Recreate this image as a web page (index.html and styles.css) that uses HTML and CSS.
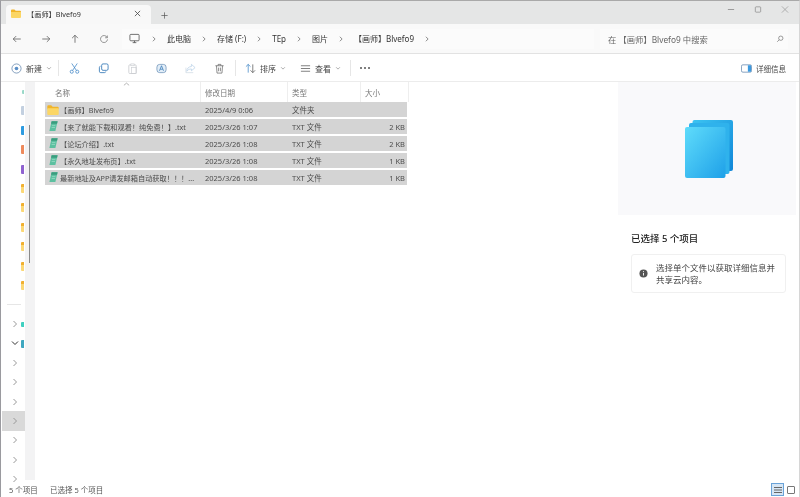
FILE: index.html
```html
<!DOCTYPE html>
<html lang="zh">
<head>
<meta charset="utf-8">
<title>【画师】Blvefo9</title>
<link rel="stylesheet" href="styles.css">
</head>
<body>
<svg class="defs" width="0" height="0" aria-hidden="true">
  <symbol id="folder" viewBox="0 0 16 14"><path d="M0 2a1.500 1.500 0 0 1 1.500-1.500h4l2 2h7A1.500 1.500 0 0 1 16 4v2H0z" fill="#f0b429"/><path d="M0 4.500h16v8A1.500 1.500 0 0 1 14.500 14h-13A1.500 1.500 0 0 1 0 12.500z" fill="#fbd665"/></symbol>
  <symbol id="txt" viewBox="0 0 12 14"><path d="M3.500 .5h8L8.500 13.500H.5z" fill="#5cc0a0"/><path d="M3.500 .5h8l-.8 3.500H2.700z" fill="#3a9c7e"/><path d="M4 6.500h4.500M3.500 9h4.500" stroke="#b9e6d6" stroke-width=".7"/></symbol>
  <symbol id="chev" viewBox="0 0 8 8"><path d="M2.500 1l3 3-3 3" fill="none" stroke="currentColor" stroke-width="1"/></symbol>
  <symbol id="drop" viewBox="0 0 8 8"><path d="M1.500 3l2.500 2.500L6.500 3" fill="none" stroke="currentColor" stroke-width=".8"/></symbol>
</svg>
<div class="window">
  <header class="titlebar">
    <div class="tab">
      <svg class="tab-ico"><use href="#folder"/></svg>
      <span class="tab-title">【画师】Blvefo9</span>
      <svg class="tab-x" viewBox="0 0 8 8"><path d="M1 1l6 6M7 1L1 7" stroke="#444" stroke-width=".9"/></svg>
    </div>
    <svg class="tab-plus" viewBox="0 0 9 9"><path d="M4.500 .5v8M.5 4.500h8" stroke="#555" stroke-width=".9"/></svg>
    <div class="winctl">
      <svg viewBox="0 0 9 9"><path d="M1 4.500h7" stroke="#888" stroke-width=".9"/></svg>
      <svg viewBox="0 0 9 9"><rect x="1.500" y="1.500" width="6" height="6" rx=".8" fill="none" stroke="#888" stroke-width=".8"/></svg>
      <svg viewBox="0 0 9 9"><path d="M1 1l7 7M8 1L1 8" stroke="#999" stroke-width=".8"/></svg>
    </div>
  </header>
  <nav class="navbar">
    <div class="navbtns">
      <svg viewBox="0 0 12 12"><path d="M10.500 6h-9M5 2.500L1.500 6 5 9.500" fill="none" stroke="#555" stroke-width=".9"/></svg>
      <svg viewBox="0 0 12 12"><path d="M1.500 6h9M7 2.500L10.500 6 7 9.500" fill="none" stroke="#555" stroke-width=".9"/></svg>
      <svg viewBox="0 0 12 12"><path d="M6 10.500v-9M2.500 5L6 1.500 9.500 5" fill="none" stroke="#555" stroke-width=".9"/></svg>
      <svg viewBox="0 0 12 12"><path d="M9.800 4.200A4.200 4.200 0 1 0 10.200 6.500M10 1.800v2.700H7.300" fill="none" stroke="#666" stroke-width=".8"/></svg>
    </div>
    <div class="address">
      <svg class="pc" viewBox="0 0 12 12"><rect x="1" y="1.500" width="10" height="7" rx="1" fill="none" stroke="#555" stroke-width=".9"/><path d="M4 10.500h4M6 8.500v2" stroke="#555" stroke-width=".9"/></svg>
      <svg class="crumb-chev"><use href="#chev"/></svg><span>此电脑</span>
      <svg class="crumb-chev"><use href="#chev"/></svg><span>存储 (F:)</span>
      <svg class="crumb-chev"><use href="#chev"/></svg><span>TEp</span>
      <svg class="crumb-chev"><use href="#chev"/></svg><span>图片</span>
      <svg class="crumb-chev"><use href="#chev"/></svg><span>【画师】Blvefo9</span>
      <svg class="crumb-chev"><use href="#chev"/></svg>
    </div>
    <div class="search">
      <span>在 【画师】Blvefo9 中搜索</span>
      <svg viewBox="0 0 10 10"><circle cx="6" cy="4" r="2.700" fill="none" stroke="#666" stroke-width=".8"/><path d="M4 6L1.500 8.500" stroke="#666" stroke-width=".8"/></svg>
    </div>
  </nav>
  <div class="toolbar">
    <div class="tool tool-new">
      <svg class="ico" viewBox="0 0 12 12"><circle cx="6" cy="6" r="5" fill="none" stroke="#5a7fa8" stroke-width=".8"/><circle cx="6" cy="6" r="2" fill="#5b8fc7"/></svg>
      <span>新建</span><svg class="drop"><use href="#drop"/></svg>
    </div>
    <i class="sep sep-a"></i>
    <div class="actions">
      <svg class="ico" viewBox="0 0 12 12"><path d="M3 .5l5 7.500M9 .5L4 8" stroke="#3b82c4" stroke-width=".8"/><circle cx="3" cy="9.500" r="1.700" fill="none" stroke="#3b82c4" stroke-width=".8"/><circle cx="9" cy="9.500" r="1.700" fill="none" stroke="#3b82c4" stroke-width=".8"/></svg>
      <svg class="ico" viewBox="0 0 12 12"><rect x="4" y="1" width="7" height="7" rx="1.500" fill="none" stroke="#2f74b5" stroke-width=".9"/><path d="M2.700 3.500A1.500 1.500 0 0 0 1.500 5v4A1.500 1.500 0 0 0 3 10.500h4A1.500 1.500 0 0 0 8.500 9.300" fill="none" stroke="#2f74b5" stroke-width=".9"/></svg>
      <svg class="ico" viewBox="0 0 12 12"><rect x="2" y="2" width="8" height="9.500" rx="1" fill="none" stroke="#c9ccd0" stroke-width=".9"/><rect x="4.200" y="1" width="3.600" height="2" fill="#fff" stroke="#c9ccd0" stroke-width=".7"/><rect x="5" y="5" width="5" height="6.500" fill="none" stroke="#c9ccd0" stroke-width=".7"/></svg>
      <svg class="ico" viewBox="0 0 12 12"><rect x="1" y="1.500" width="10" height="9" rx="3" fill="#e3eef8" stroke="#6a8fb5" stroke-width=".8"/><path d="M3.800 8.500l2.200-5.500 2.200 5.500M4.700 6.800h2.600" fill="none" stroke="#2f74b5" stroke-width=".8"/></svg>
      <svg class="ico" viewBox="0 0 12 12"><path d="M7 1.500l4 3.500-4 3.500V6.500C4.500 6.500 3 7.500 2 9c0-3 2-5 5-5.200z" fill="none" stroke="#b6cfe6" stroke-width=".8"/><path d="M1 5v5.500h8" fill="none" stroke="#c9d5e0" stroke-width=".7"/></svg>
      <svg class="ico" viewBox="0 0 12 12"><path d="M1.500 3h9M4.500 3V1.500h3V3M2.700 3l.6 8h5.400l.6-8M5 5v4M7 5v4" fill="none" stroke="#666" stroke-width=".8"/></svg>
    </div>
    <i class="sep sep-b"></i>
    <div class="tool tool-sort">
      <svg class="ico" viewBox="0 0 12 12"><path d="M3.500 10.500v-9M1 4l2.500-2.500L6 4" fill="none" stroke="#3b82c4" stroke-width=".8"/><path d="M8.500 1.500v9M6 8l2.500 2.500L11 8" fill="none" stroke="#555" stroke-width=".8"/></svg>
      <span>排序</span><svg class="drop"><use href="#drop"/></svg>
    </div>
    <div class="tool tool-view">
      <svg class="ico" viewBox="0 0 12 12"><path d="M1 3h10M1 6h10M1 9h10" stroke="#666" stroke-width=".9"/></svg>
      <span>查看</span><svg class="drop"><use href="#drop"/></svg>
    </div>
    <i class="sep sep-c"></i>
    <div class="more"><i></i><i></i><i></i></div>
    <div class="tool tool-details">
      <svg class="ico" viewBox="0 0 12 12"><rect x=".5" y="2" width="11" height="8" rx="1.500" fill="none" stroke="#5a7fa8" stroke-width=".8"/><rect x="7.500" y="2.500" width="3.500" height="7" fill="#3b9ae0"/></svg>
      <span>详细信息</span>
    </div>
  </div>
  <main class="main">
    <aside class="sidebar">
      <div class="side-tree">
        <div class="srow"><i class="chip c-teal"></i></div>
        <div class="srow"><i class="chip c-pale"></i></div>
        <div class="srow"><i class="chip c-blue"></i></div>
        <div class="srow"><i class="chip c-orange"></i></div>
        <div class="srow"><i class="chip c-purple"></i></div>
        <div class="srow"><i class="chip c-yellow"></i></div>
        <div class="srow"><i class="chip c-yellow"></i></div>
        <div class="srow"><i class="chip c-yellow"></i></div>
        <div class="srow"><i class="chip c-yellow"></i></div>
        <div class="srow"><i class="chip c-yellow"></i></div>
        <div class="srow"><i class="chip c-yellow"></i></div>
        <div class="sdiv"></div>
        <div class="srow"><svg class="schev"><use href="#chev"/></svg><i class="chip c-mint"></i></div>
        <div class="srow"><svg class="schev down" viewBox="0 0 8 8"><path d="M1 2.500l3 3 3-3" fill="none" stroke="#333" stroke-width="1"/></svg><i class="chip c-sea"></i></div>
        <div class="srow"><svg class="schev"><use href="#chev"/></svg></div>
        <div class="srow"><svg class="schev"><use href="#chev"/></svg></div>
        <div class="srow"><svg class="schev"><use href="#chev"/></svg></div>
        <div class="srow selected"><svg class="schev"><use href="#chev"/></svg></div>
        <div class="srow"><svg class="schev"><use href="#chev"/></svg></div>
        <div class="srow"><svg class="schev"><use href="#chev"/></svg></div>
        <div class="srow"><svg class="schev"><use href="#chev"/></svg></div>
      </div>
      <div class="side-gutter"><i class="thumb"></i></div>
    </aside>
    <section class="files">
      <div class="fhead">
        <div class="hcell hname">名称<svg class="sortcaret" viewBox="0 0 8 4"><path d="M1 3.500L4 1l3 2.500" fill="none" stroke="#888" stroke-width=".7"/></svg></div>
        <div class="hcell">修改日期</div>
        <div class="hcell">类型</div>
        <div class="hcell">大小</div>
      </div>
      <div class="frow">
        <div class="fname"><svg class="fico"><use href="#folder"/></svg><span>【画师】Blvefo9</span></div>
        <div>2025/4/9 0:06</div><div>文件夹</div><div class="fsize"></div>
      </div>
      <div class="frow">
        <div class="fname"><svg class="fico fico-txt"><use href="#txt"/></svg><span>【来了就能下载和观看！纯免费！】.txt</span></div>
        <div>2025/3/26 1:07</div><div>TXT 文件</div><div class="fsize">2 KB</div>
      </div>
      <div class="frow">
        <div class="fname"><svg class="fico fico-txt"><use href="#txt"/></svg><span>【论坛介绍】.txt</span></div>
        <div>2025/3/26 1:08</div><div>TXT 文件</div><div class="fsize">2 KB</div>
      </div>
      <div class="frow">
        <div class="fname"><svg class="fico fico-txt"><use href="#txt"/></svg><span>【永久地址发布页】.txt</span></div>
        <div>2025/3/26 1:08</div><div>TXT 文件</div><div class="fsize">1 KB</div>
      </div>
      <div class="frow">
        <div class="fname"><svg class="fico fico-txt"><use href="#txt"/></svg><span>最新地址及APP请发邮箱自动获取！！！...</span></div>
        <div>2025/3/26 1:08</div><div>TXT 文件</div><div class="fsize">1 KB</div>
      </div>
    </section>
    <aside class="details">
      <div class="preview">
        <svg class="stack" viewBox="0 0 48 58">
          <defs>
            <linearGradient id="pg" x1="0" y1="0" x2="1" y2="1"><stop offset="0" stop-color="#5fdcfb"/><stop offset="1" stop-color="#1ea0e8"/></linearGradient>
            <linearGradient id="pb" x1="0" y1="0" x2="1" y2="1"><stop offset="0" stop-color="#3cc4f2"/><stop offset="1" stop-color="#1187d8"/></linearGradient>
          </defs>
          <rect x="7.500" y="0" width="40.500" height="51" rx="2" fill="url(#pb)"/>
          <rect x="4" y="3" width="40.500" height="51" rx="2" fill="#2fb2ec"/>
          <rect x="0" y="7" width="40.500" height="51" rx="2" fill="url(#pg)"/>
        </svg>
      </div>
      <h2 class="dtitle">已选择 5 个项目</h2>
      <div class="dcard">
        <svg class="dinfo" viewBox="0 0 10 10"><circle cx="5" cy="5" r="4.500" fill="#555"/><path d="M5 4.300v3" stroke="#fff" stroke-width="1"/><circle cx="5" cy="2.800" r=".6" fill="#fff"/></svg>
        <p>选择单个文件以获取详细信息并共享云内容。</p>
      </div>
    </aside>
  </main>
  <footer class="status">
    <span class="st-a">5 个项目</span>
    <span>已选择 5 个项目</span>
    <div class="views">
      <span class="v-list"><svg viewBox="0 0 8 8"><path d="M0 1.500h8M0 4h8M0 6.500h8" stroke="#666" stroke-width="1"/></svg></span>
      <span class="v-grid"></span>
    </div>
  </footer>
</div>
</body>
</html>
```

FILE: styles.css
```css
* { box-sizing: border-box; }
html, body { margin: 0; height: 100%; overflow: hidden; background: #fff; }
body {
  font-family: "Noto Sans", "Noto Sans CJK SC", sans-serif;
  font-size: 8px;
  color: #555;
  filter: blur(.4px);
}
.defs { position: absolute; }
.window {
  height: 497px;
  display: flex;
  flex-direction: column;
  border-top: 1px solid #a9a9a9;
  border-left: 1px solid #9a9a9f;
  border-right: 1px solid #d6d6d6;
}
.titlebar {
  height: 23px;
  flex: none;
  display: flex;
  align-items: flex-end;
  background: #e5e6e6;
  padding-left: 5px;
}
.tab {
  width: 145px;
  height: 19px;
  background: #f8f8f8;
  border-radius: 4px 4px 0 0;
  display: flex;
  align-items: center;
  padding: 0 0 2px 5px;
  color: #333;
  font-size: 7.200px;
}
.tab-ico { width: 10px; height: 9px; }
.tab-title { margin-left: 6px; flex: 1; }
.tab-x { width: 7px; height: 7px; margin-right: 10px; }
.tab-plus { width: 7px; height: 7px; margin: 0 0 5px 10px; }
.winctl {
  margin-left: auto;
  align-self: flex-start;
  display: flex;
  gap: 19px;
  margin-top: 4px;
  margin-right: 10px;
}
.winctl svg { width: 8px; height: 9px; }
.navbar {
  height: 30px;
  flex: none;
  display: flex;
  align-items: center;
  background: #f9f9f9;
  border-bottom: 1px solid #e2e2e2;
}
.navbtns { display: flex; gap: 19px; padding-left: 11px; width: 121px; }
.navbtns svg { width: 10px; height: 10px; }
.address {
  width: 472px;
  height: 20px;
  background: #fbfbfb;
  display: flex;
  align-items: center;
  padding-left: 7px;
  gap: 10px;
  color: #333;
  font-size: 8px;
}
.pc { width: 11px; height: 11px; margin-right: 1px; }
.crumb-chev { width: 6px; height: 6px; color: #666; }
.search {
  width: 188px;
  height: 20px;
  margin-left: 6px;
  background: #fbfbfb;
  display: flex;
  align-items: center;
  justify-content: space-between;
  padding: 0 4px 0 8px;
  color: #666;
  font-size: 8.300px;
}
.search svg { width: 8px; height: 8px; }
.toolbar {
  height: 28px;
  flex: none;
  display: flex;
  align-items: center;
  background: #fff;
  border-bottom: 1px solid #ececec;
  color: #444;
  padding-top: 1px;
}
.ico { width: 11px; height: 11px; flex: none; }
.tool { display: flex; align-items: center; }
.tool-new { margin-left: 10px; gap: 4px; }
.drop { width: 6px; height: 6px; color: #777; }
.sep { width: 1px; height: 16px; background: #e6e6e6; flex: none; }
.sep-a { margin-left: 6px; }
.actions { display: flex; gap: 18px; margin-left: 10px; }
.sep-b { margin-left: 10px; }
.tool-sort { margin-left: 9px; gap: 4px; }
.tool-view { margin-left: 14px; gap: 4px; }
.sep-c { margin-left: 9px; }
.more { display: flex; gap: 2px; margin-left: 9px; }
.more i { width: 2px; height: 2px; border-radius: 50%; background: #555; }
.tool-details { margin-left: auto; gap: 4px; margin-right: 13px; font-size: 7.500px; }
.main { flex: 1; display: flex; min-height: 0; background: #fff; }
.sidebar { width: 34px; flex: none; display: flex; overflow: hidden; }
.side-tree { width: 24px; flex: none; }
.srow {
  height: 19.400px;
  display: flex;
  align-items: center;
  position: relative;
}
.srow.selected { background: #d9d9d9; margin-left: 1px; }
.schev { width: 8px; height: 8px; margin-left: 10px; color: #999; }
.schev.down { color: #333; }
.srow.selected .schev { margin-left: 9px; }
.chip {
  position: absolute;
  right: 1px;
  top: 5px;
  width: 3px;
  height: 9px;
  border-radius: 1px 0 0 1px;
}
.c-teal { background: #9ad9c9; height: 4px; top: 8px; width: 2px; }
.c-pale { background: #c3d0e0; }
.c-blue { background: #2d9be0; }
.c-orange { background: #ee8a5c; }
.c-purple { background: #8f62d0; }
.c-yellow { background: linear-gradient(#f1b030 30%, #fbd877 30%); }
.c-mint { background: #3fd0c0; height: 5px; top: 8px; }
.c-sea { background: #3fa7c0; height: 8px; top: 6px; }
.sdiv { height: 1px; margin: 9px 0 9px 6px; width: 14px; background: #e6e6e6; }
.side-gutter { width: 10px; flex: none; background: #f3f3f4; position: relative; height: 398px; }
.thumb {
  position: absolute;
  left: 4px;
  top: 43px;
  width: 1px;
  height: 138px;
  background: #8a8a8a;
}
.files { width: 375px; flex: none; padding-left: 10px; color: #555; font-size: 7.500px; }
.fhead {
  display: grid;
  grid-template-columns: 156px 87px 73px 48px;
  height: 20px;
  background: #fff;
  color: #777;
}
.hcell {
  border-right: 1px solid #eee;
  padding-left: 4px;
  display: flex;
  align-items: center;
  position: relative;
}
.hname { padding-left: 10px; }
.sortcaret { position: absolute; left: 78px; top: 0; width: 7px; height: 4px; }
.frow {
  display: grid;
  grid-template-columns: 156px 87px 73px 46px;
  width: 362px;
  height: 15px;
  margin-bottom: 2px;
  background: #d4d4d4;
  align-items: center;
  color: #4c4c4c;
}
.frow > div:nth-child(2), .frow > div:nth-child(3) { padding-left: 4px; }
.fname { display: flex; align-items: center; padding-left: 2px; white-space: nowrap; font-size: 7.200px; }
.fico { width: 12px; height: 10px; flex: none; }
.fico-txt { width: 9px; height: 12px; margin: 0 0 2px 2px; }
.fname span { margin-left: 1px; }
.fico-txt + span { margin-left: 2px; }
.fsize { text-align: right; padding-right: 2px; }
.details { flex: 1; margin-left: 208px; }
.preview {
  height: 133px;
  margin-right: 3px;
  background: #f9f9fb;
  display: flex;
  align-items: center;
  justify-content: center;
  padding: 0 0 0 3px;
}
.stack { width: 48px; height: 58px; }
.dtitle {
  margin: 17px 0 0 13px;
  font-size: 9.500px;
  line-height: 14px;
  font-weight: 500;
  color: #222;
}
.dcard {
  margin: 8px 13px 0 13px;
  height: 39px;
  border: 1px solid #f0f0f0;
  border-radius: 3px;
  display: flex;
  align-items: center;
  padding-left: 7px;
  gap: 8px;
}
.dinfo { width: 9px; height: 9px; flex: none; }
.dcard p { margin: 0; font-size: 8.500px; line-height: 12px; color: #444; width: 122px; }
.status {
  height: 15px;
  flex: none;
  display: flex;
  align-items: center;
  padding-left: 8px;
  color: #555;
  background: #fff;
  font-size: 7.500px;
}
.st-a { width: 41px; }
.views { margin-left: auto; display: flex; align-items: center; gap: 3px; margin-right: 4px; }
.v-list {
  width: 13px;
  height: 13px;
  background: #d6e6f5;
  border: 1px solid #6aa3d8;
  display: flex;
  align-items: center;
  justify-content: center;
}
.v-list svg { width: 8px; height: 8px; }
.v-grid { width: 8px; height: 8px; border: 1px solid #777; border-radius: 1px; }
```
